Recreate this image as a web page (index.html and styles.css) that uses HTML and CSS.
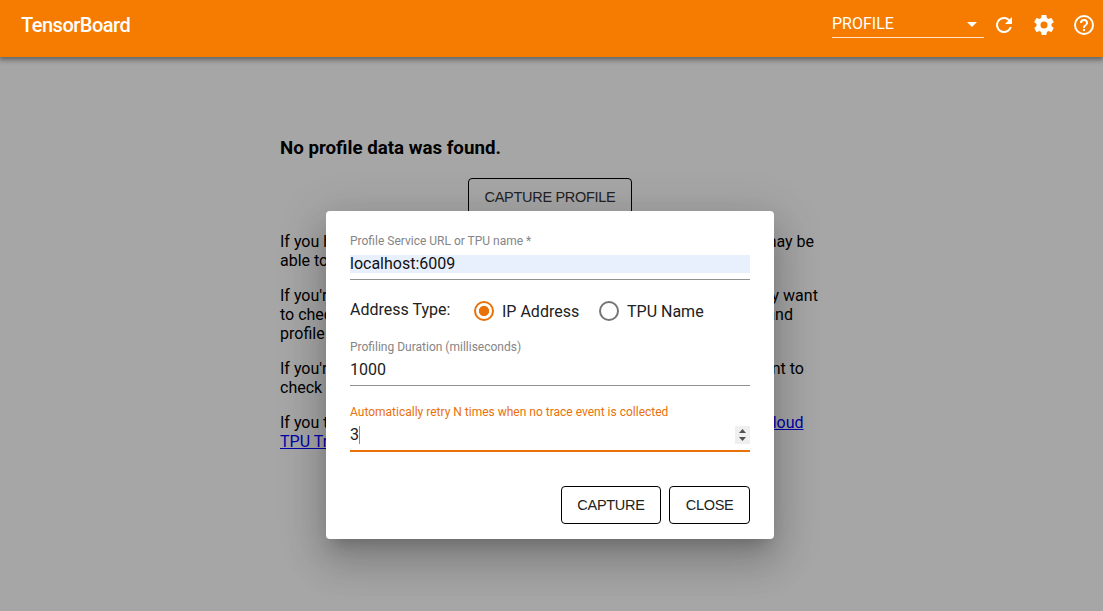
FILE: index.html
```html
<!DOCTYPE html>
<html lang="en">
<head>
<meta charset="utf-8">
<title>TensorBoard</title>
<link rel="stylesheet" href="styles.css">
</head>
<body>
<header class="toolbar">
  <div class="brand">TensorBoard</div>
  <div class="plugin-select"><span>PROFILE</span><i class="caret"></i></div>
  <svg class="icon" viewBox="0 0 24 24"><path d="M17.65 6.35A7.96 7.96 0 0 0 12 4a8 8 0 1 0 7.73 10h-2.08A6 6 0 1 1 12 6c1.66 0 3.14.69 4.22 1.78L13 11h7V4z"/></svg>
  <svg class="icon" viewBox="0 0 24 24"><path d="M19.43 12.98c.04-.32.07-.64.07-.98s-.03-.66-.07-.98l2.11-1.65c.19-.15.24-.42.12-.64l-2-3.46c-.12-.22-.39-.3-.61-.22l-2.49 1c-.52-.4-1.08-.73-1.69-.98l-.38-2.65A.488.488 0 0 0 14 2h-4c-.25 0-.46.18-.49.42l-.38 2.65c-.61.25-1.17.59-1.69.98l-2.49-1c-.23-.09-.49 0-.61.22l-2 3.46c-.13.22-.07.49.12.64l2.11 1.65c-.04.32-.07.65-.07.98s.03.66.07.98l-2.11 1.65c-.19.15-.24.42-.12.64l2 3.46c.12.22.39.3.61.22l2.49-1c.52.4 1.08.73 1.69.98l.38 2.65c.03.24.24.42.49.42h4c.25 0 .46-.18.49-.42l.38-2.65c.61-.25 1.17-.59 1.69-.98l2.49 1c.23.09.49 0 .61-.22l2-3.46c.12-.22.07-.49-.12-.64zM12 15.5a3.5 3.5 0 1 1 0-7 3.5 3.5 0 0 1 0 7z"/></svg>
  <svg class="icon" viewBox="0 0 24 24"><path d="M11 18h2v-2h-2zm1-16a10 10 0 1 0 0 20 10 10 0 0 0 0-20zm0 18a8 8 0 1 1 0-16 8 8 0 0 1 0 16zm0-14a4 4 0 0 0-4 4h2a2 2 0 1 1 4 0c0 2-3 1.75-3 5h2c0-2.25 3-2.5 3-5a4 4 0 0 0-4-4z"/></svg>
</header>
<main class="content">
  <h3>No profile data was found.</h3>
  <div class="center"><button class="btn">CAPTURE PROFILE</button></div>
  <p>If you have a model running on CPU, GPU, or Google Cloud TPU, you may be<br>able to use the above button to capture a profile.</p>
  <p>If you're a CPU or GPU user, please use the IP address option. You may want<br>to check out the tutorial for how to start a TensorFlow profiler server and<br>profile a Keras model on a GPU.</p>
  <p>If you're a TPU user, please use the TPU name option and you may want to<br>check out the tutorial on how to interpret the profiling results.</p>
  <p>If you think profiling is done properly, please see the page of <a href="#">Google Cloud<br>TPU Troubleshooting and FAQ</a>.</p>
</main>
<section class="dialog">
  <div class="label">Profile Service URL or TPU name *</div>
  <div class="field url"><span class="autofill">localhost:6009</span></div>
  <div class="radios">
    <span class="radio-title">Address Type:</span>
    <span class="radio on"></span><span class="ip">IP Address</span>
    <span class="radio"></span><span>TPU Name</span>
  </div>
  <div class="label">Profiling Duration (milliseconds)</div>
  <div class="field duration">1000</div>
  <div class="label active">Automatically retry N times when no trace event is collected</div>
  <div class="field retry"><span class="value">3</span><i class="cursor"></i>
    <svg class="spinner" viewBox="0 0 15 18"><path d="M4 7h7L7.500 3zM4 11h7l-3.500 4z"/></svg>
  </div>
  <div class="actions"><button class="btn">CAPTURE</button><button class="btn">CLOSE</button></div>
</section>
</body>
</html>
```
FILE: styles.css
```css
* { box-sizing: border-box; }
body {
  margin: 0;
  height: 611px;
  overflow: hidden;
  background: #a6a6a6;
  color: #000;
  font: 16px/19px Roboto, sans-serif;
}
.toolbar {
  display: flex;
  align-items: center;
  height: 57px;
  padding: 0 7px 7px 21px;
  background: #f57c00;
  color: #fff;
  box-shadow: 0 2px 5px 1px rgba(0, 0, 0, .4);
}
.brand {
  margin-right: auto;
  font-size: 20px;
  font-weight: 500;
  letter-spacing: -.5px;
}
.plugin-select {
  display: flex;
  align-items: center;
  justify-content: space-between;
  width: 152px;
  height: 30px;
  margin: 0 8px 0 0;
  padding: 2px 7px 0 0;
  border-bottom: 1px solid #ffe4c8;
  transform: translateY(-2px);
}
.caret {
  border: 5px solid transparent;
  border-top-color: #fff;
  border-bottom: 0;
  margin-top: 1px;
}
.icon {
  width: 24px;
  height: 24px;
  margin-right: 16px;
  fill: #fff;
}
.icon:last-child { margin-right: 0; }
.content { width: 540px; margin-left: 280px; padding-top: 80px; white-space: nowrap; }
h3 { margin: 0 0 19px; font-size: 18.72px; line-height: 22px; }
.center { display: flex; justify-content: center; margin-bottom: 16px; }
p { margin: 0 0 16px; }
a { color: #00a; }
.btn {
  height: 38px;
  padding: 0 15.500px 1px;
  border: 1px solid #000;
  border-radius: 4px;
  background: transparent;
  color: #222;
  font: 14.500px "Liberation Sans", sans-serif;
  letter-spacing: -.3px;
}
.dialog {
  position: absolute;
  left: 326px;
  top: 211px;
  width: 448px;
  height: 328px;
  padding: 23px 24px 0;
  border-radius: 4px;
  background: #fff;
  color: #212121;
  box-shadow: 0 11px 15px -7px rgba(0, 0, 0, .2), 0 24px 38px 3px rgba(0, 0, 0, .14), 0 9px 46px 8px rgba(0, 0, 0, .12);
}
.label { font-size: 12px; line-height: 14px; color: #858585; }
.label.active { color: #e8710a; }
.field { display: flex; border-bottom: 1px solid #919191; }
.url { height: 32px; padding-top: 7px; }
.autofill { width: 100%; height: 18px; line-height: 18px; background: #e8f0fe; color: #111; }
.radios { display: flex; align-items: center; height: 60px; padding: 3px 0 1px; }
.radio-title { width: 124px; transform: translateY(-2px); }
.radio {
  width: 20px;
  height: 20px;
  margin-right: 8px;
  border: 2px solid #757575;
  border-radius: 50%;
}
.radio.on { border-color: #e8710a; background: radial-gradient(circle, #e8710a 4.800px, transparent 5.400px); }
.ip { width: 97px; }
.duration { height: 32px; padding-top: 6px; margin-bottom: 19px; }
.retry { height: 33px; padding-top: 7px; border-bottom: 2px solid #e8710a; }
.value { height: 18px; line-height: 17px; }
.cursor { width: 1px; height: 18px; background: #e8710a; }
.spinner { width: 15px; height: 18px; margin-left: auto; background: #efefef; fill: #505050; }
.actions { display: flex; justify-content: flex-end; gap: 8px; margin-top: 34px; }
.actions .btn { padding: 0 15.600px 1px; }
```
